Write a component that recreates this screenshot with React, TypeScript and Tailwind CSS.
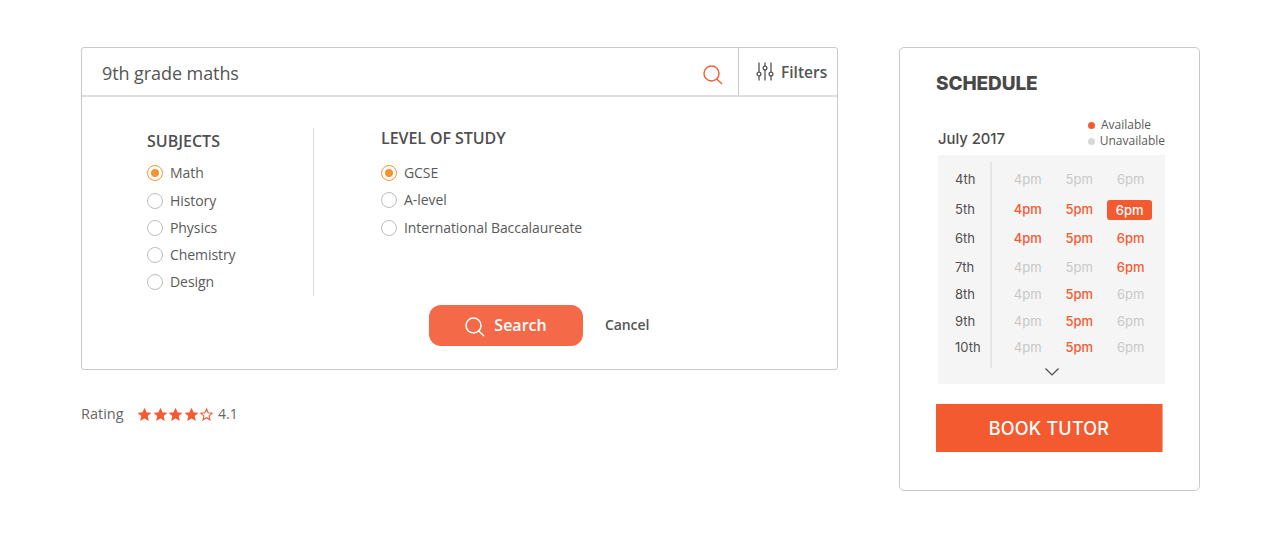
import React from 'react';

const subjects = ['Math', 'History', 'Physics', 'Chemistry', 'Design'];
const levels = ['GCSE', 'A-level', 'International Baccalaureate'];

const schedule = [
  { day: '4th', h: 'h-[30px]', open: [] as number[] },
  { day: '5th', h: 'h-[30px]', open: [4, 5, 6], picked: 6 },
  { day: '6th', h: 'h-[28px]', open: [4, 5, 6] },
  { day: '7th', h: 'h-[30px]', open: [6] },
  { day: '8th', h: 'h-[24px]', open: [5] },
  { day: '9th', h: 'h-[29px]', open: [5] },
  { day: '10th', h: 'h-[24px]', open: [5] },
];

const SearchIcon = ({ className }: { className: string }) => (
  <svg viewBox="0 0 20 20" fill="none" stroke="currentColor" strokeWidth="1.5" className={className}>
    <circle cx="8.5" cy="8.5" r="7.5" />
    <path d="M13.8 14 L19 19" />
  </svg>
);

const FiltersIcon = () => (
  <svg viewBox="0 0 18 19" fill="none" stroke="currentColor" strokeWidth="1.3" className="w-[18px] h-[19px] text-[#555]">
    <path d="M3 0.5 V10 M3 14 V18.5 M9 0.5 V4 M9 8 V18.5 M15 0.5 V10 M15 14 V18.5" />
    <circle cx="3" cy="12" r="1.9" />
    <circle cx="9" cy="6" r="1.9" />
    <circle cx="15" cy="12" r="1.9" />
  </svg>
);

const StarIcon = ({ filled }: { filled: boolean }) => (
  <svg viewBox="0 0 24 24" stroke="#f45a30" strokeWidth="2" fill={filled ? '#f45a30' : 'none'} className="w-[13px] h-[13px]">
    <polygon points="12,2 15,8.9 22.5,9.6 16.8,14.5 18.5,21.8 12,18 5.5,21.8 7.2,14.5 1.5,9.6 9,8.9" />
  </svg>
);

const Radio = ({ label, checked }: { label: string; checked?: boolean }) => (
  <div className="flex items-center h-4 gap-[7px] text-[14px] tracking-[-0.07px] text-[#5a5a5a]">
    {checked ? (
      <span className="w-4 h-4 rounded-full border border-[#f39433] flex items-center justify-center">
        <span className="w-2 h-2 rounded-full bg-[#f39433]" />
      </span>
    ) : (
      <span className="w-4 h-4 rounded-full border border-[#bdbdbd]" />
    )}
    <span className="-mt-0.5">{label}</span>
  </div>
);

export default function App() {
  return (
    <div className="flex items-start gap-[61px] pl-[81px] pt-[47px] h-[539px] bg-white overflow-hidden font-['Open_Sans',sans-serif]">
      <div className="w-[757px]">
        <div className="h-[323px] border border-[#c9c9c9] rounded-[3px]">
          <div className="h-[49px] flex border-b-2 border-[#dedede]">
            <div className="flex-1 flex items-center justify-between pl-5 pr-[15px]">
              <span className="text-[18px] tracking-[-0.08px] text-[#555] mt-1">9th grade maths</span>
              <SearchIcon className="w-5 h-5 text-[#f4623c] mt-1.5" />
            </div>
            <div className="w-[99px] flex items-center gap-[7px] pl-[17px] border-l border-[#c9c9c9]">
              <FiltersIcon />
              <span className="text-[15.5px] font-semibold text-[#555] mt-0.5">Filters</span>
            </div>
          </div>

          <div className="pt-[31px]">
            <div className="flex pl-[65px] h-[168px]">
              <div className="w-[167px] border-r border-[#dcdcdc]">
                <div className="h-[26px] leading-[26px] text-[16px] font-semibold text-[#4f4f4f]">SUBJECTS</div>
                <div className="mt-[11px] flex flex-col gap-[11px]">
                  {subjects.map((s, i) => (
                    <div key={s} className={i === 0 ? 'mb-px' : ''}>
                      <Radio label={s} checked={i === 0} />
                    </div>
                  ))}
                </div>
              </div>
              <div className="pl-[67px]">
                <div className="h-5 leading-5 text-[16px] tracking-[-0.07px] font-semibold text-[#4f4f4f]">LEVEL OF STUDY</div>
                <div className="mt-[17px] flex flex-col gap-[11px]">
                  {levels.map((s, i) => (
                    <div key={s} className={i === 1 ? 'mb-px' : ''}>
                      <Radio label={s} checked={i === 0} />
                    </div>
                  ))}
                </div>
              </div>
            </div>

            <div className="flex items-center ml-[347px] mt-[9px]">
              <button className="w-[154px] h-[41px] rounded-xl bg-[#f46a48] flex items-center justify-center gap-[9px] text-white text-[16px] font-semibold">
                <SearchIcon className="w-5 h-5 mt-0.5" />
                <span className="-mt-0.5">Search</span>
              </button>
              <span className="ml-[22px] -mt-0.5 text-[14px] tracking-[-0.1px] font-semibold text-[#555]">Cancel</span>
            </div>
          </div>
        </div>

        <div className="flex items-center mt-[34px] h-5 text-[14.5px] text-[#666]">
          <span className="w-[57px]">Rating</span>
          <div className="flex gap-[2.5px]">
            {[0, 1, 2, 3, 4].map((i) => (
              <StarIcon key={i} filled={i < 4} />
            ))}
          </div>
          <span className="ml-[5px] -mt-0.5 text-[14px] font-medium">4.1</span>
        </div>
      </div>

      <div className="w-[301px] h-[444px] border border-[#c9c9c9] rounded-[5px] pl-9 pt-[26px] font-['Inter',sans-serif]">
        <div className="h-5 leading-5 text-[19px] font-extrabold tracking-[-0.1px] text-[#484848]">SCHEDULE</div>

        <div className="mt-[23px] ml-0.5 w-[227px] flex items-end justify-between">
          <span className="text-[14.8px] leading-5 font-medium text-[#4a4a4a]">July 2017</span>
          <div className="w-[77px] text-[12px] leading-4 text-[#5a5a5a] font-['Open_Sans',sans-serif]">
            <div className="flex items-center gap-1.5">
              <span className="w-[7px] h-[7px] rounded-full bg-[#f45a30]" />
              Available
            </div>
            <div className="flex items-center gap-[5px]">
              <span className="w-[7px] h-[7px] rounded-full bg-[#d8d8d8]" />
              Unavailable
            </div>
          </div>
        </div>

        <div className="mt-1.5 ml-0.5 w-[227px] h-[229px] bg-[#f5f5f5] pt-[7px] text-[13px]">
          <div className="flex">
            <div className="w-[54px] pt-[3px] pb-2 pl-[17px] border-r-2 border-[#e6e6e6] text-[#4f4f4f]">
              {schedule.map((row) => (
                <div key={row.day} className={`${row.h} flex items-center`}>
                  {row.day}
                </div>
              ))}
            </div>
            <div className="flex-1 pt-[3px] pl-2.5">
              {schedule.map((row) => (
                <div key={row.day} className={`${row.h} flex items-center`}>
                  {[4, 5, 6].map((hour) => {
                    const isOpen = row.open.includes(hour);
                    const isPicked = row.picked === hour;
                    return (
                      <div key={hour} className="w-[51.5px] flex justify-center">
                        <span
                          className={
                            isPicked
                              ? 'w-[45px] h-5 leading-5 text-center rounded-[3px] bg-[#f45a30] text-white font-medium -translate-x-px'
                              : isOpen
                              ? 'text-[#f45a30] font-medium'
                              : 'text-[#c8c8c8]'
                          }
                        >
                          {hour}pm
                        </span>
                      </div>
                    );
                  })}
                </div>
              ))}
            </div>
          </div>
          <div className="flex justify-center">
            <svg viewBox="0 0 14 8" fill="none" stroke="#444" strokeWidth="1.1" className="w-3.5 h-2">
              <path d="M0.5 0.5 L7 7 L13.5 0.5" />
            </svg>
          </div>
        </div>

        <button className="mt-5 w-[227px] h-12 bg-[#f45a30] border-r border-[#f8a58c] text-white text-[18px] tracking-[0.2px] font-medium">
          BOOK TUTOR
        </button>
      </div>
    </div>
  );
}
